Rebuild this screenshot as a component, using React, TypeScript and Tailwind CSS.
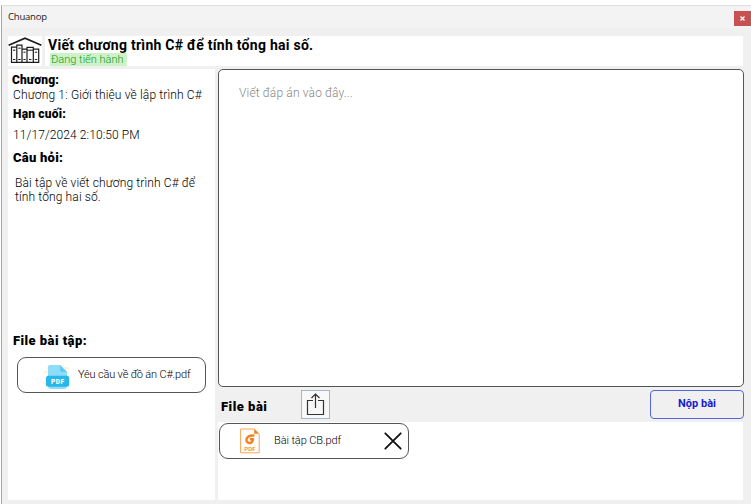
import React from "react";

function LibraryIcon() {
  return (
    <svg width="34" height="30" viewBox="0 0 34 30" fill="none" stroke="#1c1c1c" strokeWidth="1.2">
      <path d="M0.6 9.2L17 2.2l16.4 7" strokeWidth="1.7" />
      <path d="M3.5 11.2h5.3v15.2H3.5zM8.8 9.2h5.2v17.2H8.8zM14 13.2h5v13.2h-5zM19 11.4h6.3v15h-6.3zM25.3 13.2h5.4v13.2h-5.4z" />
      <path d="M5 14.2h2.4M5 23.5h2.4M10.3 12.2h2.4M10.3 23.5h2.4M15.4 16.2h2.2M15.4 23.5h2.2M19 14.2h6.3M21 23.5h2.4M26.8 16.2h2.4M26.8 23.5h2.4" strokeWidth="1" />
    </svg>
  );
}

function BluePdfIcon() {
  return (
    <svg width="28" height="26" viewBox="0 0 28 26">
      <path d="M4 3h22v3H4zM1 7h8v2H1zM2 13h4v2H2zM20 8h6v2h-6zM0 18h5v2H0z" fill="#fff3df" />
      <path d="M7 1h10l7 7v14a3 3 0 0 1-3 3H8a3 3 0 0 1-3-3V3a2 2 0 0 1 2-2Z" fill="#8edcf8" />
      <path d="M17 1l7 7h-5a2 2 0 0 1-2-2Z" fill="#5ccbef" />
      <rect x="3" y="11.8" width="23.2" height="11" rx="2.5" fill="#27b7e8" />
      <text x="14.8" y="19.8" textAnchor="middle" fontSize="6.6" fontWeight="900" fill="#fff" letterSpacing="0.4">PDF</text>
    </svg>
  );
}

function OrangePdfIcon() {
  return (
    <svg width="20" height="26" viewBox="0 0 20 26" fill="none">
      <path d="M14 1H.6v23.8h18.6V6" stroke="#f7a45a" strokeWidth="1" />
      <path d="M14.2.6v5.2h5Z" fill="#f58220" />
      <path d="M14.4 7.6c-4.8-.6-8 1-8 4.4 0 2.6 2.7 3.6 4.7 2.6 1.3-.7 1.7-1.9 1.8-3.3h-3" stroke="#f58220" strokeWidth="2.5" />
      <text x="10" y="22.6" textAnchor="middle" fontSize="6.2" fontWeight="500" fill="#f58220">PDF</text>
    </svg>
  );
}

export default function App() {
  return (
    <div className="h-[504px] w-[751px] overflow-hidden bg-white pt-[5px] pl-px font-['Roboto','Liberation_Sans',sans-serif] text-black">
      <div className="flex h-[499px] flex-col border-t border-l border-t-[#dedede] border-l-[#a8a8a8] bg-[#f0f0f0]">
        <header className="flex h-[22px] shrink-0 items-center justify-between bg-[#f3f3f3] pl-1.5">
          <span className="mt-px font-['Open_Sans','Noto_Sans',sans-serif] text-[9.5px] tracking-[-0.2px] text-[#222]">Chuanop</span>
          <button aria-label="Close" className="mt-[2px] flex h-[15px] w-[17px] items-center justify-center bg-[#c75050]">
            <svg width="5" height="5" viewBox="0 0 5 5" stroke="#fff" strokeWidth="1.3"><path d="M.5.5l4 4M4.5.5l-4 4" /></svg>
          </button>
        </header>

        <div className="mt-2 ml-1.5 flex h-[30px] w-[735px] shrink-0 gap-[3px]">
          <div className="w-[34px] bg-white"><LibraryIcon /></div>
          <div className="flex flex-1 flex-col items-start bg-white">
            <h1 className="ml-[3px] h-[17px] text-[14px] leading-[18px] font-bold tracking-[0.265px] whitespace-nowrap">Viết chương trình C# để tính tổng hai số.</h1>
            <span className="ml-[5px] h-[13px] w-[77px] bg-[#cdf2c8] pl-px text-[11px] leading-[13px] font-light whitespace-nowrap text-[#159a20]">Đang tiến hành</span>
          </div>
        </div>

        <main className="mt-[3px] ml-1.5 flex h-[431px] w-[736px] shrink-0 gap-[3px]">
          <aside className="flex w-[207px] flex-col bg-white pl-[5px] whitespace-nowrap">
            <h2 className="mt-[3px] -ml-px h-4 text-[12px] leading-4 font-black tracking-[0.1px]">Chương:</h2>
            <p className="h-[14px] text-[12px] leading-[14px] font-light tracking-[0.15px]">Chương 1: Giới thiệu về lập trình C#</p>
            <h2 className="mt-1 h-4 text-[12px] leading-4 font-black tracking-[0.2px]">Hạn cuối:</h2>
            <p className="mt-[5px] h-4 text-[12px] leading-4 font-light tracking-[0.1px]">11/17/2024 2:10:50 PM</p>
            <h2 className="mt-[7px] h-4 text-[13px] leading-4 font-black tracking-[0.25px]">Câu hỏi:</h2>
            <p className="mt-[9px] ml-[2px] text-[12px] leading-[14px] font-light tracking-[0.13px]"><span className="block pt-px">Bài tập về viết chương trình C# để</span><span className="block">tính tổng hai số.</span></p>
            <h2 className="mt-[129px] h-4 text-[13px] leading-4 font-black tracking-[0.45px]">File bài tập:</h2>
            <button className="mt-2 ml-1 flex h-[36px] w-[189px] items-center rounded-[9px] border border-[#555] pl-[25px]">
              <span className="mt-1"><BluePdfIcon /></span>
              <span className="ml-[7px] text-[11px] font-light tracking-[-0.17px]">Yêu cầu về đồ án C#.pdf</span>
            </button>
          </aside>

          <section className="flex w-[526px] flex-col">
            <textarea aria-label="Answer" placeholder="Viết đáp án vào đây..." className="h-[318px] w-[526px] shrink-0 resize-none rounded-[5px] border border-[#555] bg-white pt-[15px] pl-5 text-[12px] leading-4 font-light tracking-[0.15px] placeholder:text-[#888]" />
            <div className="flex h-[35px] shrink-0 items-start pt-[3px]">
              <h2 className="mt-[9px] ml-[3px] w-[80px] text-[13px] leading-4 font-black tracking-[0.5px]">File bài</h2>
              <button aria-label="Share" className="flex h-[29px] w-[29px] items-center justify-center border border-[#a4b6cc] bg-[#f8f8f8]">
                <svg width="19" height="24" viewBox="0 0 19 24" fill="none" stroke="#333" strokeWidth="1.2">
                  <path d="M7 7.5H1.5v14h16v-14H12M9.5 15V1.5M5.5 5l4-4 4 4" />
                </svg>
              </button>
              <button className="ml-auto h-[29px] w-[94px] rounded-[4px] border border-[#5363e5] text-[11px] font-bold text-[#111bd0]">Nộp bài</button>
            </div>
            <div className="w-[525px] flex-1 bg-white pt-px pl-px">
              <div className="flex h-[36px] w-[190px] items-center rounded-[9px] border border-[#555] pl-5">
                <span className="-mt-px"><OrangePdfIcon /></span>
                <span className="ml-[14px] text-[11px] font-light tracking-[-0.1px]">Bài tập CB.pdf</span>
                <button aria-label="Remove" className="mr-[6px] ml-auto">
                  <svg width="18" height="18" viewBox="0 0 18 18" stroke="#111" strokeWidth="1.8" strokeLinecap="round"><path d="M1.3 1.3l15.4 15.4M16.7 1.3L1.3 16.7" /></svg>
                </button>
              </div>
            </div>
          </section>
        </main>
      </div>
    </div>
  );
}
